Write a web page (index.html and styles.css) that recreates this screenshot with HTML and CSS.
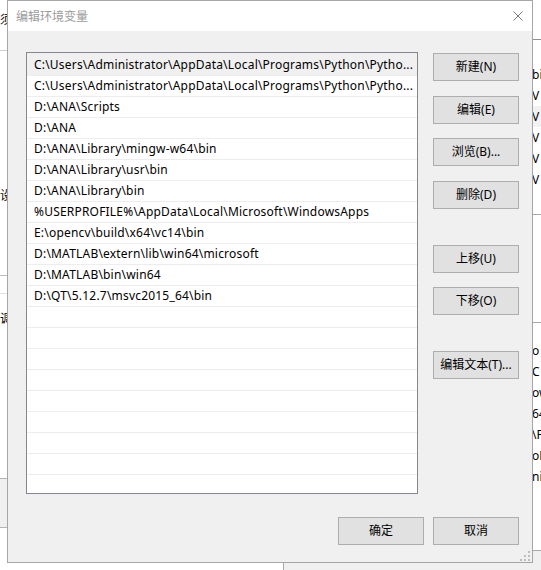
FILE: index.html
```html
<!DOCTYPE html>
<html lang="zh-CN">
<head>
<meta charset="utf-8">
<title>编辑环境变量</title>
<link rel="stylesheet" href="styles.css">
</head>
<body>
<div class="desktop">
  <div class="bg-left">
    <div class="bl-char bl-c1">须</div>
    <div class="bl-line bl-l1"></div>
    <div class="bl-char bl-c2">设</div>
    <div class="bl-line bl-l2"></div>
    <div class="bl-line bl-l3"></div>
    <div class="bl-char bl-c3">调</div>
    <div class="bl-box"></div>
  </div>
  <div class="bg-mid"></div>
  <div class="bg-right">
    <div class="br-line br-l1"></div>
    <div class="br-rows br-rows1">
      <div class="br-row">bi</div>
      <div class="br-row">V</div>
      <div class="br-row br-hl">V</div>
      <div class="br-row">V</div>
      <div class="br-row">V</div>
      <div class="br-row">V</div>
    </div>
    <div class="br-line br-l2"></div>
    <div class="br-line br-l3"></div>
    <div class="br-rows br-rows2">
      <div class="br-row">o</div>
      <div class="br-row">C</div>
      <div class="br-row">ow</div>
      <div class="br-row">64</div>
      <div class="br-row">\F</div>
      <div class="br-row">oN</div>
      <div class="br-row">ni</div>
    </div>
    <div class="br-line br-l4"></div>
    <div class="br-fill"></div>
  </div>
  <div class="bg-bottom">
    <div class="bb-white"></div>
    <div class="bb-grey"></div>
  </div>

  <section class="dialog">
    <header class="titlebar">
      <span class="title">编辑环境变量</span>
      <svg class="close" width="10" height="10" viewBox="0 0 10 10" aria-hidden="true">
        <path d="M0.5 0.5 L9.5 9.5 M9.5 0.5 L0.5 9.5" stroke="#7a7a7a" stroke-width="1" fill="none"/>
      </svg>
    </header>
    <div class="client">
      <div class="main">
        <div class="listbox">
          <div class="row row-first row-sel">C:\Users\Administrator\AppData\Local\Programs\Python\Pytho...</div>
          <div class="row">C:\Users\Administrator\AppData\Local\Programs\Python\Pytho...</div>
          <div class="row">D:\ANA\Scripts</div>
          <div class="row">D:\ANA</div>
          <div class="row">D:\ANA\Library\mingw-w64\bin</div>
          <div class="row">D:\ANA\Library\usr\bin</div>
          <div class="row">D:\ANA\Library\bin</div>
          <div class="row">%USERPROFILE%\AppData\Local\Microsoft\WindowsApps</div>
          <div class="row">E:\opencv\build\x64\vc14\bin</div>
          <div class="row">D:\MATLAB\extern\lib\win64\microsoft</div>
          <div class="row">D:\MATLAB\bin\win64</div>
          <div class="row">D:\QT\5.12.7\msvc2015_64\bin</div>
          <div class="row"></div>
          <div class="row"></div>
          <div class="row"></div>
          <div class="row"></div>
          <div class="row"></div>
          <div class="row"></div>
          <div class="row"></div>
          <div class="row"></div>
          <div class="row"></div>
        </div>
        <div class="side">
          <button class="btn">新建(N)</button>
          <button class="btn gap-s1">编辑(E)</button>
          <button class="btn gap-s2">浏览(B)...</button>
          <button class="btn gap-s1">删除(D)</button>
          <button class="btn gap-l">上移(U)</button>
          <button class="btn gap-s2">下移(O)</button>
          <button class="btn gap-l">编辑文本(T)...</button>
        </div>
      </div>
      <div class="footer">
        <button class="btn">确定</button>
        <button class="btn">取消</button>
      </div>
    </div>
    <svg class="grip" width="10" height="10" viewBox="0 0 10 10" aria-hidden="true">
      <rect x="8" y="0" width="2" height="2" fill="#bdbdbd"/>
      <rect x="4" y="4" width="2" height="2" fill="#bdbdbd"/>
      <rect x="8" y="4" width="2" height="2" fill="#bdbdbd"/>
      <rect x="0" y="8" width="2" height="2" fill="#bdbdbd"/>
      <rect x="4" y="8" width="2" height="2" fill="#bdbdbd"/>
      <rect x="8" y="8" width="2" height="2" fill="#bdbdbd"/>
    </svg>
  </section>
</div>
</body>
</html>
```

FILE: styles.css
```css
* { box-sizing: border-box; }

html, body {
  margin: 0;
  padding: 0;
  background: #ffffff;
}

body {
  font-family: "Noto Sans", "Noto Sans CJK SC", sans-serif;
  font-size: 12px;
  color: #000;
  overflow: hidden;
}

.desktop {
  position: relative;
  width: 541px;
  height: 570px;
  overflow: hidden;
  display: grid;
  grid-template-columns: 20px 1fr 20px;
  grid-template-rows: 563px 7px;
  background: #ffffff;
}

/* ---------- background window (left strip) ---------- */
.bg-left {
  grid-column: 1;
  grid-row: 1;
  display: flex;
  flex-direction: column;
}
.bl-char {
  height: 16px;
  line-height: 16px;
  text-align: right;
  padding-right: 11px;
  font-family: "Noto Sans CJK SC", sans-serif;
  font-size: 12px;
}
.bl-c1 { margin-top: 11px; }
.bl-line { height: 0; border-top: 1px solid #cfcfcf; }
.bl-l1 { margin-top: 23px; }
.bl-c2 { margin-top: 136px; }
.bl-l2 { margin-top: 72px; border-top-color: #bdbdbd; }
.bl-l3 { margin-top: 17px; border-top-color: #e3e3e3; }
.bl-c3 { margin-top: 16px; }
.bl-box {
  margin-top: 152px;
  height: 50px;
  background: #f0f0f0;
  border-top: 1px solid #b4b4b4;
  border-bottom: 1px solid #b4b4b4;
}

.bg-mid { grid-column: 2; grid-row: 1; }

/* ---------- background window (right strip) ---------- */
.bg-right {
  grid-column: 3;
  grid-row: 1 / span 2;
  display: flex;
  flex-direction: column;
}
.br-line { height: 0; border-top: 1px solid #a8a8a8; }
.br-l1 { margin-top: 39px; border-top-color: #8f8f8f; }
.br-rows { display: flex; flex-direction: column; }
.br-rows1 { margin-top: 24px; }
.br-row {
  height: 21px;
  line-height: 21px;
  padding-left: 11px;
  white-space: nowrap;
}
.br-hl { background: #f2f2f2; }
.br-l2 { margin-top: 24px; }
.br-l3 { margin-top: 107px; }
.br-rows2 { margin-top: 17px; }
.br-l4 { margin-top: 63px; }
.br-fill { flex: 1; background: #f0f0f0; }

/* ---------- bottom strip ---------- */
.bg-bottom {
  grid-column: 1 / span 2;
  grid-row: 2;
  display: flex;
}
.bb-white { width: 283px; background: #fff; }
.bb-grey { flex: 1; background: #f0f0f0; border-left: 1px solid #a8a8a8; }

/* ---------- dialog ---------- */
.dialog {
  position: absolute;
  left: 7px;
  top: 0;
  width: 526px;
  height: 563px;
  border: 1px solid #a6a6a6;
  background: #f0f0f0;
  display: flex;
  flex-direction: column;
}

.titlebar {
  height: 30px;
  flex: none;
  background: #ffffff;
  display: flex;
  align-items: center;
  padding-left: 8px;
}
.title {
  flex: 1;
  font-family: "Noto Sans CJK SC", sans-serif;
  font-size: 12px;
  color: #9b9b9b;
  line-height: 16px;
}
.close {
  display: block;
  margin-right: 9px;
}

.client {
  flex: 1;
  padding: 21px 13px 0 18px;
  display: flex;
  flex-direction: column;
}

.main {
  display: flex;
  gap: 15px;
}

.listbox {
  width: 392px;
  height: 442px;
  border: 1px solid #828790;
  background: #ffffff;
  overflow: hidden;
  display: flex;
  flex-direction: column;
}
.row {
  flex: none;
  height: 21px;
  line-height: 20px;
  padding-left: 7px;
  border-bottom: 1px solid #ededed;
  white-space: nowrap;
  overflow: hidden;
  font-size: 12px;
  letter-spacing: 0.2px;
}
.row-first { height: 23px; line-height: 23px; }
.row-sel { background: #f0f0f0; }

.side {
  display: flex;
  flex-direction: column;
  padding-top: 1px;
}

.btn {
  width: 86px;
  height: 28px;
  margin: 0;
  padding: 0;
  background: #e1e1e1;
  border: 1px solid #adadad;
  border-radius: 0;
  font-family: "Noto Sans", "Noto Sans CJK SC", sans-serif;
  font-size: 12px;
  color: #000;
  line-height: 26px;
  text-align: center;
  white-space: nowrap;
}
.gap-s1 { margin-top: 15px; }
.gap-s2 { margin-top: 14px; }
.gap-l { margin-top: 36px; }

.footer {
  margin-top: 23px;
  display: flex;
  justify-content: flex-end;
  gap: 9px;
}

.grip {
  position: absolute;
  right: 2px;
  bottom: 1px;
}
```
